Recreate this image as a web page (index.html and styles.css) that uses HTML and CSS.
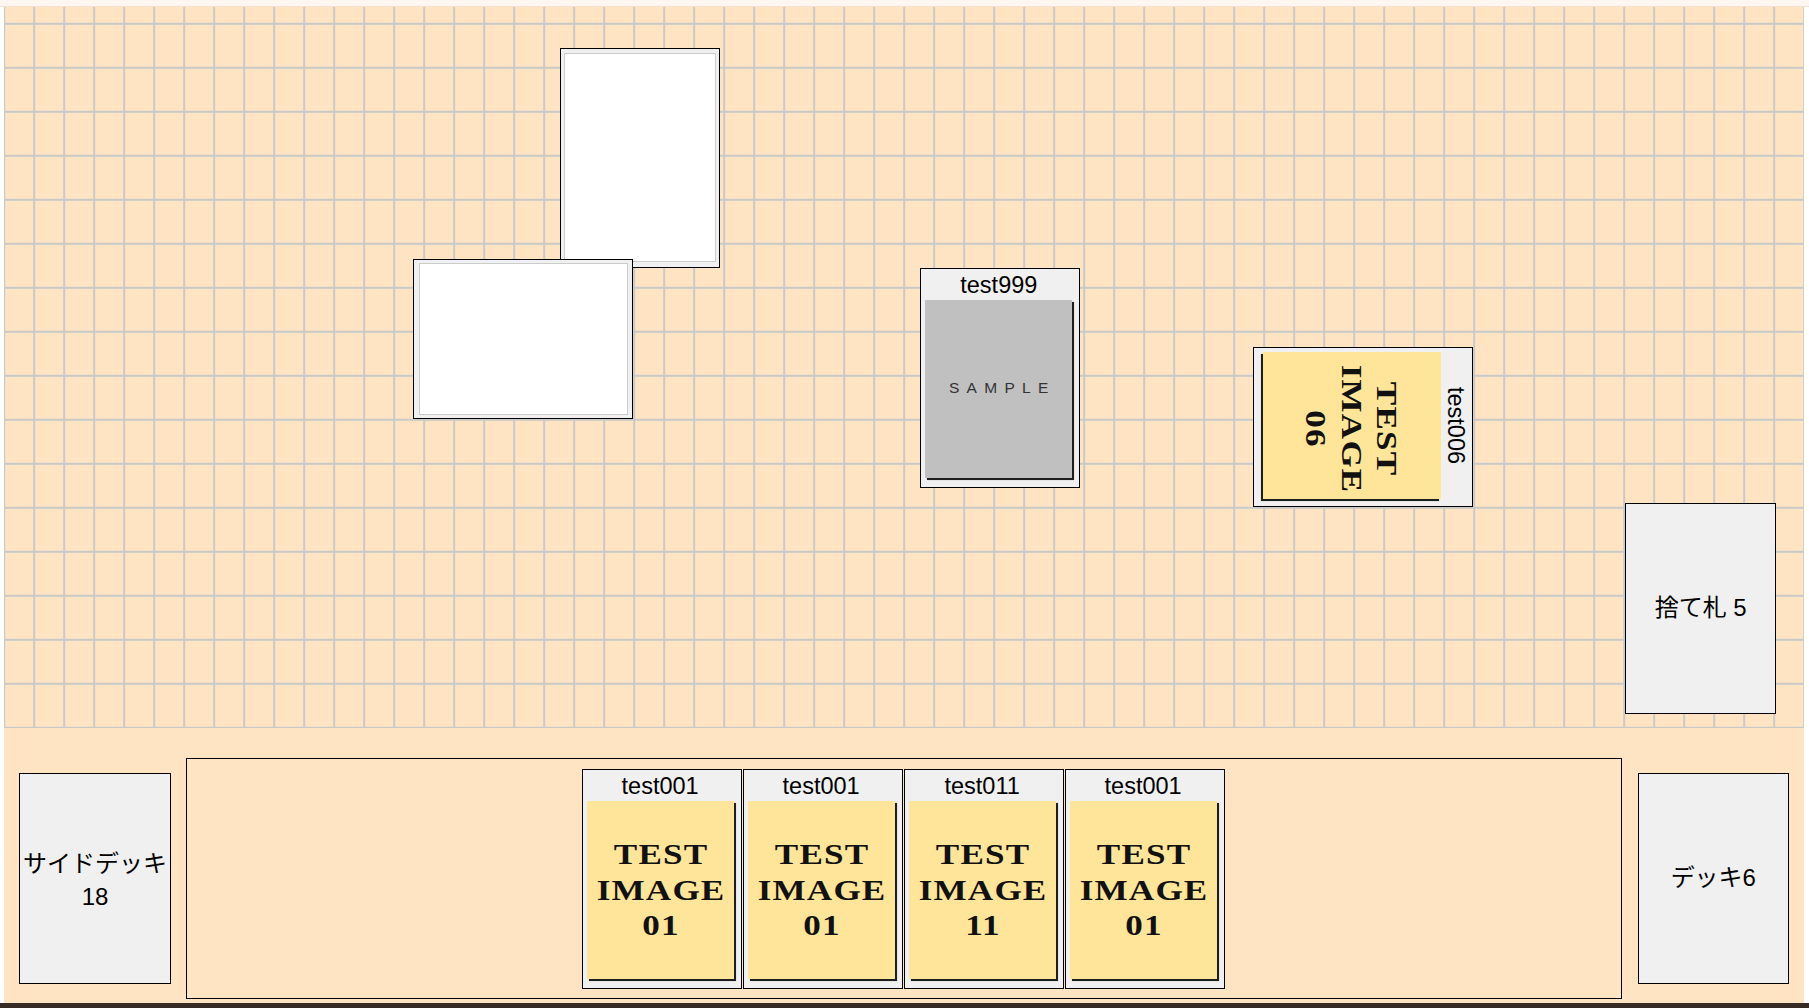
FILE: index.html
```html
<!DOCTYPE html>
<html lang="ja">
<head>
<meta charset="utf-8">
<title>Card Table</title>
<link rel="stylesheet" href="styles.css">
</head>
<body>
<div class="topbar"></div>
<main class="table">
  <section class="field">
    <div class="card blank" style="left:555.3px;top:41.3px"><div class="blank-face"></div></div>
    <div class="card blank rot" style="left:438.3px;top:222.3px"><div class="blank-face"></div></div>
    <div class="card" style="left:915.3px;top:261.3px">
      <div class="card-title">test999</div>
      <div class="card-img sample"><span>SAMPLE</span></div>
    </div>
    <div class="card rot" style="left:1278.3px;top:310.3px">
      <div class="card-title">test006</div>
      <div class="card-img test"><span>TEST<br>IMAGE<br>06</span></div>
    </div>
    <div class="pile discard" style="left:1620px;top:496.3px">捨て札 5</div>
  </section>
  <section class="tray">
    <div class="pile side">サイドデッキ<br>18</div>
    <div class="hand">
      <div class="card">
        <div class="card-title">test001</div>
        <div class="card-img test"><span>TEST<br>IMAGE<br>01</span></div>
      </div>
      <div class="card">
        <div class="card-title">test001</div>
        <div class="card-img test"><span>TEST<br>IMAGE<br>01</span></div>
      </div>
      <div class="card">
        <div class="card-title">test011</div>
        <div class="card-img test"><span>TEST<br>IMAGE<br>11</span></div>
      </div>
      <div class="card">
        <div class="card-title">test001</div>
        <div class="card-img test"><span>TEST<br>IMAGE<br>01</span></div>
      </div>
    </div>
    <div class="pile deck">デッキ6</div>
  </section>
</main>
<div class="bottombar"></div>
</body>
</html>
```
FILE: styles.css
```css
html, body {
  margin: 0;
  padding: 0;
  background: #ffffff;
  overflow: hidden;
  height: 1008px;
}
body {
  font-family: "Liberation Sans", "Noto Sans CJK JP", sans-serif;
  color: #000;
}
.topbar {
  height: 6px;
  background: #fff6f2;
  border-bottom: 1px solid #f7e0cf;
}
.table {
  margin: 0 5px 0 4px;
  width: 1800px;
  background: #ffe4c4;
}
.field {
  position: relative;
  height: 721px;
  overflow: hidden;
  box-sizing: border-box;
  border-left: 1.5px solid #c9c9c9;
  background-color: #ffe4c4;
  background-origin: border-box;
  background-image:
    linear-gradient(90deg, #c9c9c9 1.7px, transparent 1.7px),
    linear-gradient(180deg, #c9c9c9 1.7px, transparent 1.7px);
  background-size: 30px 100%, 100% 44px;
  background-position: 29.2px 0, 0 15.8px;
}
.tray {
  height: 275px;
  box-sizing: border-box;
  padding: 30px 15px 4px 15.3px;
  display: flex;
  align-items: center;
}
.card {
  width: 160px;
  height: 220px;
  box-sizing: border-box;
  border: 1px solid #000;
  background: #f0f0f0;
  display: flex;
  flex-direction: column;
  align-items: flex-start;
  padding: 3px 0 0 4px;
  flex: none;
}
.field .card, .field .pile {
  position: absolute;
}
.rot {
  transform: rotate(90deg);
}
.card-title {
  align-self: stretch;
  margin-left: -4px;
  padding-right: 3px;
  text-align: center;
  font-size: 23.5px;
  line-height: 27px;
  height: 27px;
}
.card-img {
  width: 147px;
  height: 178px;
  margin-top: 1px;
  box-shadow: 2px 2px 0.6px rgba(0, 0, 0, 0.88);
  display: flex;
  align-items: center;
  justify-content: center;
  text-align: center;
}
.card-img.sample {
  background: #c0c0c0;
  color: #333;
  font-size: 15.5px;
  letter-spacing: 7.3px;
  padding: 0 0 3px 7px;
  box-sizing: border-box;
}
.card-img.test {
  background: #ffe599;
  color: #111;
}
.card-img.test span {
  display: inline-block;
  font-family: "Liberation Serif", serif;
  font-weight: bold;
  font-size: 30px;
  line-height: 35.5px;
  letter-spacing: 1px;
  padding-left: 1px;
  transform: scaleX(1.17);
}
.card.rot .card-img.test span {
  position: relative;
  left: 3px;
}
.card.blank {
  padding: 4px 3px 5px 3px;
}
.blank-face {
  flex: 1;
  align-self: stretch;
  background: #fff;
  border: 1px solid #cccccc;
}
.pile {
  width: 151.4px;
  height: 211px;
  box-sizing: border-box;
  border: 1px solid #000;
  background: #f0f0f0;
  display: flex;
  align-items: center;
  justify-content: center;
  text-align: center;
  font-size: 24px;
  line-height: 33px;
  padding-bottom: 2px;
  flex: none;
}
.pile.side {
  padding-bottom: 0;
  padding-top: 2px;
}
.hand {
  flex: 1;
  height: 241px;
  margin: 0 16px 0 15px;
  box-sizing: border-box;
  border: 1px solid #000;
  display: flex;
  justify-content: center;
  align-items: center;
  gap: 1px;
  padding-right: 1px;
}
.bottombar {
  height: 5px;
  background: #372c26;
}
```
